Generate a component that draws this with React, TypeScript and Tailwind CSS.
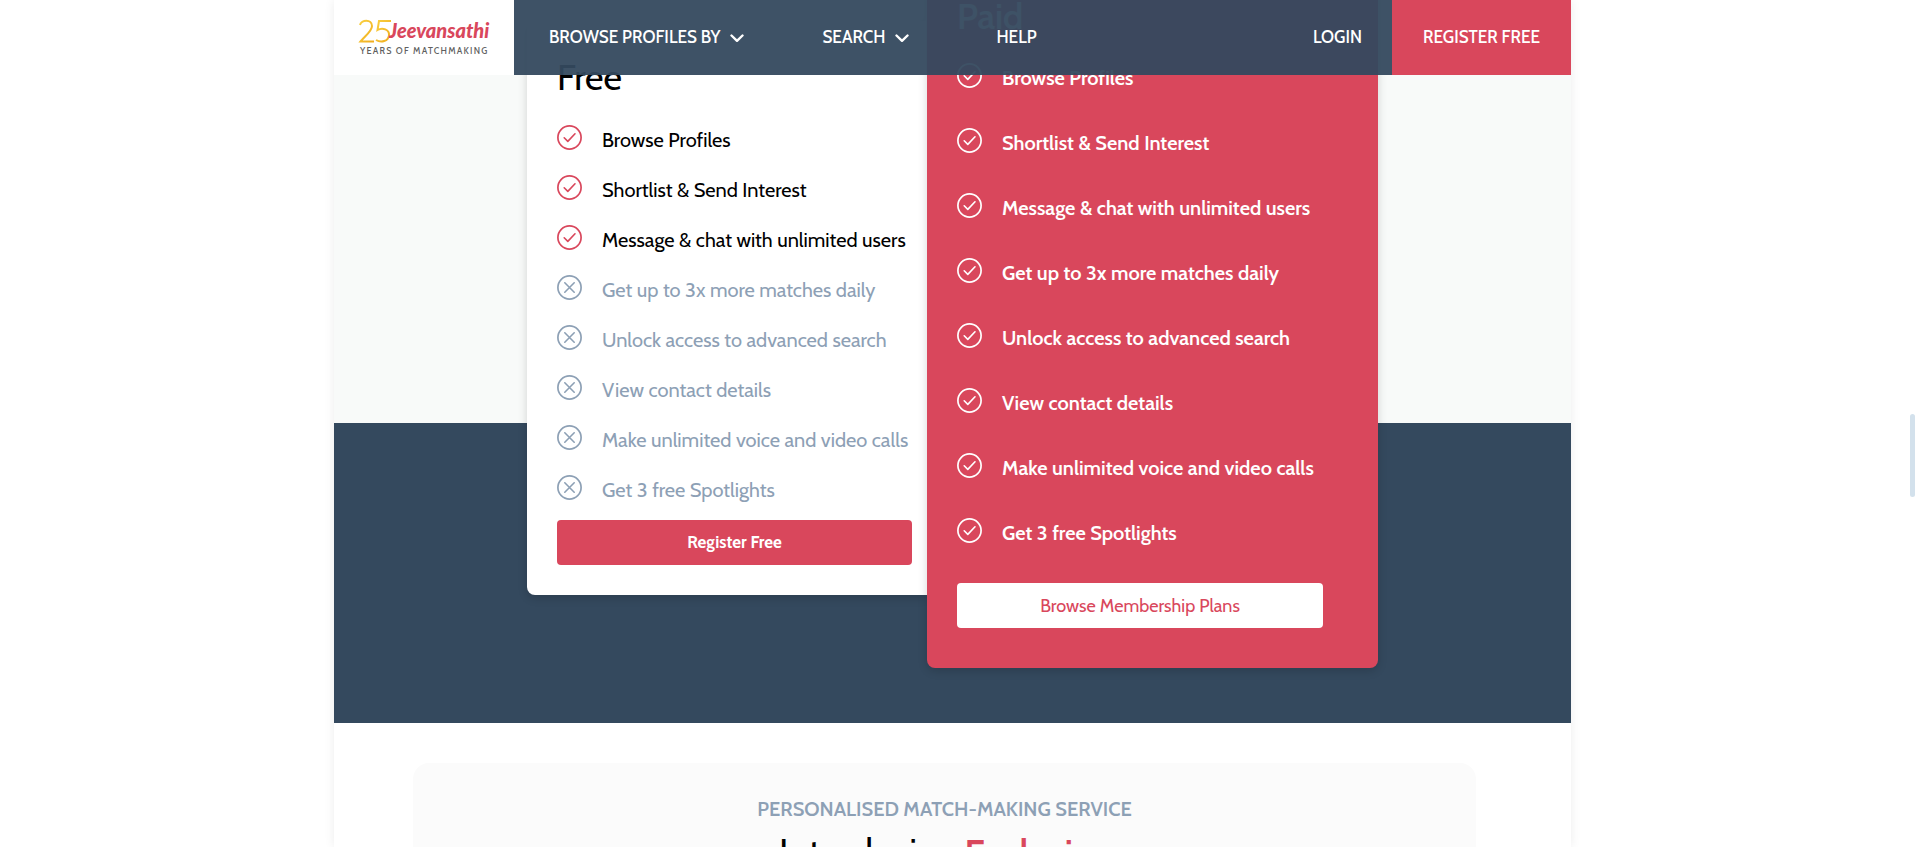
type Feature = { label: string; free: boolean };

const features: Feature[] = [
  { label: 'Browse Profiles', free: true },
  { label: 'Shortlist & Send Interest', free: true },
  { label: 'Message & chat with unlimited users', free: true },
  { label: 'Get up to 3x more matches daily', free: false },
  { label: 'Unlock access to advanced search', free: false },
  { label: 'View contact details', free: false },
  { label: 'Make unlimited voice and video calls', free: false },
  { label: 'Get 3 free Spotlights', free: false },
];

function CheckIcon() {
  return (
    <svg viewBox="0 0 25 25" className="size-[25px] shrink-0" fill="none" stroke="currentColor" strokeLinecap="round" strokeLinejoin="round" aria-hidden="true">
      <circle cx="12.5" cy="12.5" r="11.6" strokeWidth="1.7" />
      <path d="M7.2 12.800l3.600 3.600 7.200-7.600" strokeWidth="1.6" />
    </svg>
  );
}

function CrossIcon() {
  return (
    <svg viewBox="0 0 25 25" className="size-[25px] shrink-0" fill="none" stroke="currentColor" strokeLinecap="round" aria-hidden="true">
      <circle cx="12.5" cy="12.5" r="11.6" strokeWidth="1.7" />
      <path d="M7.8 7.8l9.4 9.4M17.2 7.8l-9.4 9.4" strokeWidth="1.6" />
    </svg>
  );
}

function Chevron() {
  return (
    <svg viewBox="0 0 14 14" className="size-3.5" fill="none" stroke="currentColor" strokeWidth="2.4" strokeLinecap="round" strokeLinejoin="round" aria-hidden="true">
      <path d="M1.5 4.500L7 9.800l5.500-5.300" />
    </svg>
  );
}

function Logo() {
  return (
    <svg viewBox="0 0 132 40" className="h-10 w-[132px]" role="img" aria-label="Jeevansathi">
      <defs>
        <linearGradient id="gold" x1="0" y1="0" x2="1" y2="1">
          <stop offset="0" stopColor="#f9cf3f" />
          <stop offset="1" stopColor="#f0ac1c" />
        </linearGradient>
      </defs>
      <g fill="none" stroke="url(#gold)" strokeWidth="2">
        <path d="M2 7C3 1.500 14 .5 14 8c0 5-6 9-11.500 15.500H16" />
        <path d="M33 3H21l-1.500 9c5-3 12-.5 11.500 5-.5 6.500-8 8-13 5" />
      </g>
      <text x="31" y="20" fontSize="20" fontWeight="900" fontStyle="italic" fill="#d9475c" fontFamily="Lato, sans-serif">Jeevansathi</text>
      <text x="2" y="36" fontSize="9" letterSpacing="1.2" fill="#5f5f5f" fontFamily="Cabin, Lato, sans-serif">YEARS OF MATCHMAKING</text>
    </svg>
  );
}

function Header() {
  return (
    <header className="absolute inset-x-0 top-0 z-10 flex h-[75px] text-[17px] font-medium text-white">
      <a href="#home" className="flex w-[180px] shrink-0 items-center justify-center bg-white">
        <Logo />
      </a>
      <nav className="flex grow items-center bg-[#34495e]/95 pl-[35px] pr-[30px]">
        <button type="button" className="mr-[78px] flex items-center gap-2.5">
          BROWSE PROFILES BY <Chevron />
        </button>
        <button type="button" className="mr-[87px] flex items-center gap-2.5">
          SEARCH <Chevron />
        </button>
        <a href="#help">HELP</a>
        <a href="#login" className="ml-auto">LOGIN</a>
      </nav>
      <a href="#register" className="flex w-[179px] shrink-0 items-center justify-center bg-[#d9475c]">
        REGISTER FREE
      </a>
    </header>
  );
}

function Plans() {
  return (
    <section className="-mt-13 flex items-center justify-center bg-[linear-gradient(to_bottom,#f8faf9_475px,#34495e_475px)] pb-[55px]">
      <article className="flex w-[400px] flex-col rounded-l-lg bg-white pt-[34px] pr-[15px] pb-[30px] pl-[30px] shadow-[0_3px_10px_rgba(0,0,0,0.16)]">
        <h2 className="text-4xl leading-11 text-black">Free</h2>
        <ul className="mt-[26px] flex flex-col gap-5 text-xl leading-[30px] whitespace-nowrap">
          {features.map((f) => (
            <li key={f.label} className="flex gap-5">
              <span className={f.free ? 'text-[#d9475c]' : 'text-[#8da0b5]'}>{f.free ? <CheckIcon /> : <CrossIcon />}</span>
              <span className={f.free ? 'text-black' : 'text-[#8da0b5]'}>{f.label}</span>
            </li>
          ))}
        </ul>
        <button type="button" className="mt-[15px] h-[45px] rounded bg-[#d9475c] text-[17px] font-bold text-white">
          Register Free
        </button>
      </article>
      <article className="flex w-[451px] flex-col rounded-lg bg-[#d9475c] pt-[46px] pr-[55px] pb-10 pl-[30px] text-white shadow-[0_3px_10px_rgba(0,0,0,0.16)]">
        <h2 className="text-4xl leading-11 font-medium">Paid</h2>
        <ul className="mt-[25px] flex flex-col gap-[35px] text-xl leading-[30px] font-semibold whitespace-nowrap">
          {features.map((f) => (
            <li key={f.label} className="flex gap-5">
              <CheckIcon />
              <span>{f.label}</span>
            </li>
          ))}
        </ul>
        <button type="button" className="mt-[35px] h-[45px] rounded bg-white text-lg text-[#d9475c]">
          Browse Membership Plans
        </button>
      </article>
    </section>
  );
}

function Exclusive() {
  return (
    <section className="mt-10 mr-[95px] ml-[79px] rounded-2xl bg-[#fbfbfb] pt-8 pb-16 text-center">
      <p className="text-xl leading-7 font-semibold text-[#8da0b5]">PERSONALISED MATCH-MAKING SERVICE</p>
      <h2 className="mt-2 text-[37px] leading-11 text-black">
        Introducing <span className="font-semibold text-[#d9475c]">Exclusive</span>
      </h2>
    </section>
  );
}

export default function App() {
  return (
    <div className="flex h-screen overflow-hidden bg-white font-['Cabin','Lato',sans-serif]">
      <div className="flex grow justify-center">
        <main className="relative flex w-full max-w-[1237px] flex-col shadow-[0_0_10px_rgba(0,0,0,0.08)]">
          <Header />
          <Plans />
          <Exclusive />
        </main>
      </div>
      <div className="w-[15px] shrink-0 pt-[414px] pl-[5px]" aria-hidden="true">
        <div className="h-[83px] w-[5px] rounded-full bg-[#d3e1ec]" />
      </div>
    </div>
  );
}
